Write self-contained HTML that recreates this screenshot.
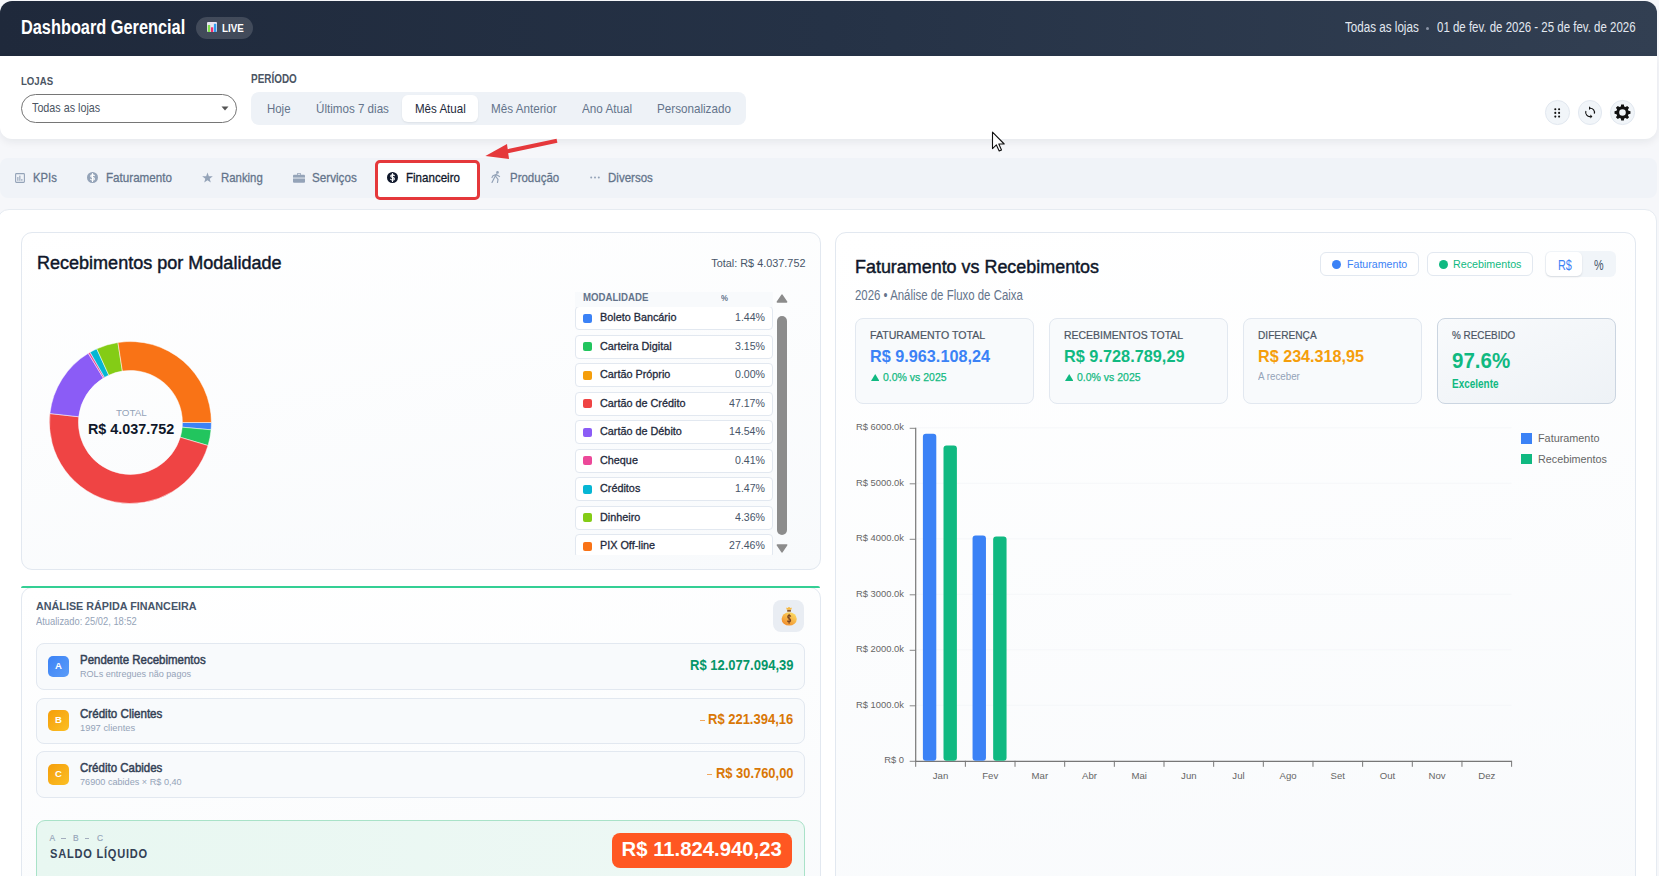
<!DOCTYPE html>
<html lang="pt-BR">
<head>
<meta charset="utf-8">
<title>Dashboard Gerencial</title>
<style>
*{box-sizing:border-box;margin:0;padding:0}
html,body{width:1659px;height:876px;overflow:hidden}
body{position:relative;background:#f6f7fa;font-family:"Liberation Sans",sans-serif;color:#0f172a}
.t{position:absolute;white-space:nowrap;line-height:1}
.b{position:absolute}
</style>
</head>
<body>
<div class="b" style="left:0;top:1px;width:1657px;height:55px;border-radius:12px 12px 0 0;background:linear-gradient(90deg,#1f293b 0%,#253246 50%,#323f52 100%)"></div>
<div class="t" style="left:20.80px;top:17.00px;font-size:20.00px;color:#ffffff;font-weight:bold;transform:scaleX(0.8162);transform-origin:0 0;">Dashboard Gerencial</div>
<div class="b" style="left:196px;top:17px;width:57px;height:22px;border-radius:11px;background:rgba(255,255,255,.15)"></div>
<svg class="b" style="left:207px;top:22px" width="10" height="10" viewBox="0 0 10 10">
<rect x="0" y="0" width="10" height="10" rx="1" fill="#e8e4f0"/>
<rect x="0.8" y="3" width="2.4" height="7" fill="#7ee04a"/>
<rect x="3.9" y="5.3" width="2.3" height="4.7" fill="#ee2d6e"/>
<rect x="6.9" y="1.8" width="2.4" height="8.2" fill="#2f9cf0"/>
</svg>
<div class="t" style="left:222.30px;top:24.00px;font-size:10.43px;color:#ffffff;font-weight:bold;transform:scaleX(0.9398);transform-origin:0 0;">LIVE</div>
<div class="t" style="left:1344.50px;top:20.00px;font-size:14.06px;color:#e2e8f0;transform:scaleX(0.8284);transform-origin:0 0;">Todas as lojas</div>
<div class="b" style="left:1426px;top:26.6px;width:3.4px;height:3.4px;border-radius:50%;background:#8a94a6"></div>
<div class="t" style="left:1436.70px;top:20.00px;font-size:14.06px;color:#e2e8f0;transform:scaleX(0.8165);transform-origin:0 0;">01 de fev. de 2026 - 25 de fev. de 2026</div>
<div class="b" style="left:0;top:56px;width:1657px;height:83px;background:#fff;border-radius:0 0 12px 12px;box-shadow:0 3px 8px rgba(15,23,42,.07)"></div>
<div class="t" style="left:20.70px;top:77.00px;font-size:10.43px;color:#4b5563;font-weight:bold;transform:scaleX(0.9227);transform-origin:0 0;">LOJAS</div>
<div class="b" style="left:21px;top:94px;width:216px;height:29px;border:1px solid #767676;border-radius:15px;background:#fff"></div>
<div class="t" style="left:32.10px;top:102.00px;font-size:12.46px;color:#4b5563;transform:scaleX(0.8635);transform-origin:0 0;">Todas as lojas</div>
<svg class="b" style="left:221px;top:106px" width="8" height="5" viewBox="0 0 8 5"><path d="M0.5 0.5 L7.5 0.5 L4 4.5 Z" fill="#555"/></svg>
<div class="t" style="left:251.30px;top:73.00px;font-size:12.17px;color:#4b5563;font-weight:bold;transform:scaleX(0.8175);transform-origin:0 0;">PERÍODO</div>
<div class="b" style="left:251px;top:92px;width:495px;height:33px;border-radius:8px;background:#eef2f7"></div>
<div class="b" style="left:402px;top:95px;width:76px;height:27px;border-radius:6px;background:#fff;box-shadow:0 1px 2px rgba(15,23,42,.08)"></div>
<div class="t" style="left:266.60px;top:102.00px;font-size:13.19px;color:#64748b;transform:scaleX(0.8662);transform-origin:0 0;">Hoje</div>
<div class="t" style="left:316.00px;top:102.00px;font-size:13.19px;color:#64748b;transform:scaleX(0.8802);transform-origin:0 0;">Últimos 7 dias</div>
<div class="t" style="left:414.50px;top:102.00px;font-size:13.19px;color:#1e293b;transform:scaleX(0.8755);transform-origin:0 0;">Mês Atual</div>
<div class="t" style="left:490.90px;top:102.00px;font-size:13.19px;color:#64748b;transform:scaleX(0.8862);transform-origin:0 0;">Mês Anterior</div>
<div class="t" style="left:581.80px;top:102.00px;font-size:13.19px;color:#64748b;transform:scaleX(0.8874);transform-origin:0 0;">Ano Atual</div>
<div class="t" style="left:657.20px;top:102.00px;font-size:13.19px;color:#64748b;transform:scaleX(0.8842);transform-origin:0 0;">Personalizado</div>
<div class="b" style="left:1545.15px;top:100.1px;width:24.5px;height:24.5px;border-radius:50%;background:#f1f5f9;border:1px solid #e2e8f0"></div>
<div class="b" style="left:1577.75px;top:100.1px;width:24.5px;height:24.5px;border-radius:50%;background:#f1f5f9;border:1px solid #e2e8f0"></div>
<div class="b" style="left:1610.15px;top:100.1px;width:24.5px;height:24.5px;border-radius:50%;background:#f1f5f9;border:1px solid #e2e8f0"></div>
<svg class="b" style="left:1554px;top:107.5px" width="7" height="10.5" viewBox="0 0 7 10.5"><circle cx="1.3" cy="1.2" r="1.05" fill="#111"/><circle cx="1.3" cy="4.9" r="1.05" fill="#111"/><circle cx="1.3" cy="8.6" r="1.05" fill="#111"/><circle cx="5.1" cy="1.2" r="1.05" fill="#111"/><circle cx="5.1" cy="4.9" r="1.05" fill="#111"/><circle cx="5.1" cy="8.6" r="1.05" fill="#111"/></svg>
<svg class="b" style="left:1583.9px;top:105.7px" width="12" height="13" viewBox="0 0 12 13">
<path d="M6.2 2.2 A4.2 4.2 0 0 1 10.3 7.6" fill="none" stroke="#111" stroke-width="1.1"/>
<path d="M1.9 5.0 A4.2 4.2 0 0 0 6.8 10.5" fill="none" stroke="#111" stroke-width="1.1"/>
<path d="M5.0 0.3 L5.0 4.1 L7.0 2.2 Z" fill="#111"/>
<path d="M6.4 8.4 L6.4 12.4 L8.4 10.4 Z" fill="#111"/>
</svg>
<svg class="b" style="left:1614px;top:104px" width="17" height="17" viewBox="0 0 17 17"><path d="M14.48 6.85 L16.48 7.13 L16.48 9.87 L14.48 10.15 L13.89 11.56 L15.11 13.18 L13.18 15.11 L11.56 13.89 L10.15 14.48 L9.87 16.48 L7.13 16.48 L6.85 14.48 L5.44 13.89 L3.82 15.11 L1.89 13.18 L3.11 11.56 L2.52 10.15 L0.52 9.87 L0.52 7.13 L2.52 6.85 L3.11 5.44 L1.89 3.82 L3.82 1.89 L5.44 3.11 L6.85 2.52 L7.13 0.52 L9.87 0.52 L10.15 2.52 L11.56 3.11 L13.18 1.89 L15.11 3.82 L13.89 5.44 Z M11.8 8.5 A3.3 3.3 0 1 0 5.2 8.5 A3.3 3.3 0 1 0 11.8 8.5 Z" fill="#111" fill-rule="evenodd"/></svg>
<div class="b" style="left:0;top:158px;width:1657px;height:40px;background:#f0f3f8;border-radius:8px"></div>
<div class="b" style="left:376.5px;top:162px;width:101px;height:35.5px;background:#fff"></div>
<div class="t" style="left:33.40px;top:171.00px;font-size:13.62px;color:#64748b;transform:scaleX(0.8307);transform-origin:0 0;-webkit-text-stroke:0.3px #64748b;">KPIs</div>
<div class="t" style="left:106.00px;top:171.00px;font-size:13.62px;color:#64748b;transform:scaleX(0.8546);transform-origin:0 0;-webkit-text-stroke:0.3px #64748b;">Faturamento</div>
<div class="t" style="left:221.40px;top:171.00px;font-size:13.62px;color:#64748b;transform:scaleX(0.8363);transform-origin:0 0;-webkit-text-stroke:0.3px #64748b;">Ranking</div>
<div class="t" style="left:312.30px;top:171.00px;font-size:13.62px;color:#64748b;transform:scaleX(0.8575);transform-origin:0 0;-webkit-text-stroke:0.3px #64748b;">Serviços</div>
<div class="t" style="left:406.30px;top:171.00px;font-size:13.62px;color:#0f172a;transform:scaleX(0.8490);transform-origin:0 0;-webkit-text-stroke:0.3px #0f172a;">Financeiro</div>
<div class="t" style="left:509.50px;top:171.00px;font-size:13.62px;color:#64748b;transform:scaleX(0.8436);transform-origin:0 0;-webkit-text-stroke:0.3px #64748b;">Produção</div>
<div class="t" style="left:608.30px;top:171.00px;font-size:13.62px;color:#64748b;transform:scaleX(0.8473);transform-origin:0 0;-webkit-text-stroke:0.3px #64748b;">Diversos</div>
<svg class="b" style="left:15px;top:172.8px" width="10" height="10" viewBox="0 0 10 10"><rect x="0.6" y="0.6" width="8.8" height="8.8" rx="0.8" fill="none" stroke="#94a3b8" stroke-width="1.1"/><rect x="2.3" y="4" width="1.1" height="3.8" fill="#94a3b8"/><rect x="4.3" y="2.6" width="1.1" height="5.2" fill="#94a3b8"/><rect x="6.3" y="6" width="1.1" height="1.8" fill="#94a3b8"/></svg>
<svg class="b" style="left:87px;top:172px" width="11" height="11" viewBox="0 0 11 11"><circle cx="5.5" cy="5.5" r="5.5" fill="#94a3b8"/><path d="M7.3 3.6 Q6.9 2.9 5.5 2.9 Q3.7 2.9 3.7 4.1 Q3.7 5.1 5.5 5.4 Q7.4 5.8 7.4 6.9 Q7.4 8.1 5.5 8.1 Q4.1 8.1 3.6 7.3 M5.5 1.6 V9.4" fill="none" stroke="#fff" stroke-width="1.15" stroke-linecap="round"/></svg>
<svg class="b" style="left:387px;top:172px" width="11" height="11" viewBox="0 0 11 11"><circle cx="5.5" cy="5.5" r="5.5" fill="#0f172a"/><path d="M7.3 3.6 Q6.9 2.9 5.5 2.9 Q3.7 2.9 3.7 4.1 Q3.7 5.1 5.5 5.4 Q7.4 5.8 7.4 6.9 Q7.4 8.1 5.5 8.1 Q4.1 8.1 3.6 7.3 M5.5 1.6 V9.4" fill="none" stroke="#fff" stroke-width="1.15" stroke-linecap="round"/></svg>
<svg class="b" style="left:202px;top:171.5px" width="11" height="11" viewBox="0 0 11 11"><polygon points="5.50,0.40 6.85,4.14 10.83,4.27 7.69,6.71 8.79,10.53 5.50,8.30 2.21,10.53 3.31,6.71 0.17,4.27 4.15,4.14" fill="#94a3b8"/></svg>
<svg class="b" style="left:293px;top:172px" width="12" height="11" viewBox="0 0 12 11"><path d="M4 1.2 H8 V2.8 H7 V2.1 H5 V2.8 H4Z" fill="#94a3b8"/><rect x="0" y="2.8" width="12" height="8" rx="1" fill="#94a3b8"/><rect x="0" y="5.6" width="12" height="0.9" fill="#eef2f7"/></svg>
<svg class="b" style="left:490.5px;top:171px" width="10" height="12" viewBox="0 0 10 12"><circle cx="6.5" cy="1.4" r="1.3" fill="#94a3b8"/><path d="M5.5 3 L3.5 6.5 L1 11.5 M4.8 5.5 L7 8.5 L6.5 11.5 M5.2 3.5 L8.5 5.5 M5 3.5 L2 4.8 L1 6.5" stroke="#94a3b8" stroke-width="1.2" fill="none" stroke-linecap="round"/></svg>
<svg class="b" style="left:589.5px;top:176px" width="10" height="3" viewBox="0 0 10 3"><circle cx="1.2" cy="1.5" r="1" fill="#94a3b8"/><circle cx="5" cy="1.5" r="1" fill="#94a3b8"/><circle cx="8.8" cy="1.5" r="1" fill="#94a3b8"/></svg>
<div class="b" style="left:374.5px;top:160px;width:105px;height:39.5px;border:3.9px solid #e5383b;border-radius:5px"></div>
<svg class="b" style="left:470px;top:130px" width="100" height="40" viewBox="470 130 100 40"><line x1="504" y1="152" x2="557" y2="140.8" stroke="#e5383b" stroke-width="4"/><polygon points="485.4,156 507,144 509,159" fill="#e5383b"/></svg>
<div class="b" style="left:-3px;top:209px;width:1660px;height:700px;background:#fff;border-radius:12px;border:1px solid #e6ebf1"></div>
<div class="b" style="left:21.3px;top:232.3px;width:799.8px;height:337.4px;border:1px solid #e2e8f0;border-radius:11px;background:linear-gradient(170deg,#ffffff 0%,#f8fafc 100%)"></div>
<div class="t" style="left:36.70px;top:254.00px;font-size:18.41px;color:#0f172a;transform:scaleX(0.9793);transform-origin:0 0;-webkit-text-stroke:0.45px #0f172a;">Recebimentos por Modalidade</div>
<div class="t" style="left:711.30px;top:258.00px;font-size:10.87px;color:#475569;">Total: R$ 4.037.752</div>
<svg class="b" style="left:0;top:0" width="260" height="520" viewBox="0 0 260 520"><path d="M211.40 422.50 A81 81 0 0 1 211.07 429.82 L182.19 427.20 A52 52 0 0 0 182.40 422.50 Z" fill="#3b82f6" stroke="#fff" stroke-width="0.5"/><path d="M211.07 429.82 A81 81 0 0 1 208.05 445.54 L180.25 437.29 A52 52 0 0 0 182.19 427.20 Z" fill="#22c55e" stroke="#fff" stroke-width="0.5"/><path d="M208.05 445.54 A81 81 0 0 1 49.89 413.56 L78.72 416.76 A52 52 0 0 0 180.25 437.29 Z" fill="#ef4444" stroke="#fff" stroke-width="0.5"/><path d="M49.89 413.56 A81 81 0 0 1 88.29 353.30 L103.37 378.08 A52 52 0 0 0 78.72 416.76 Z" fill="#8b5cf6" stroke="#fff" stroke-width="0.5"/><path d="M88.29 353.30 A81 81 0 0 1 90.09 352.24 L104.52 377.40 A52 52 0 0 0 103.37 378.08 Z" fill="#ec4899" stroke="#fff" stroke-width="0.5"/><path d="M90.09 352.24 A81 81 0 0 1 96.74 348.82 L108.79 375.20 A52 52 0 0 0 104.52 377.40 Z" fill="#06b6d4" stroke="#fff" stroke-width="0.5"/><path d="M96.74 348.82 A81 81 0 0 1 117.93 342.47 L122.39 371.12 A52 52 0 0 0 108.79 375.20 Z" fill="#84cc16" stroke="#fff" stroke-width="0.5"/><path d="M117.93 342.47 A81 81 0 0 1 211.40 422.50 L182.40 422.50 A52 52 0 0 0 122.39 371.12 Z" fill="#f97316" stroke="#fff" stroke-width="0.5"/></svg>
<div class="t" style="left:116.00px;top:408.00px;font-size:9.86px;color:#94a3b8;">TOTAL</div>
<div class="t" style="left:88.30px;top:422.00px;font-size:14.06px;color:#0f172a;font-weight:bold;transform:scaleX(1.0223);transform-origin:0 0;">R$ 4.037.752</div>
<div class="b" style="left:0;top:291.6px;width:800px;height:263.2px;overflow:hidden"><div class="b" style="left:0;top:-291.6px;width:800px;height:900px"><div class="b" style="left:575px;top:306.1px;width:197.5px;height:24px;background:#fff;border:1px solid #e2e8f0;border-radius:4px"></div><div class="b" style="left:583px;top:313.80px;width:9px;height:9px;border-radius:2px;background:#3b82f6"></div><div class="t" style="left:599.50px;top:312.00px;font-size:11.40px;color:#1e293b;transform:scaleX(0.9500);transform-origin:0 0;-webkit-text-stroke:0.3px #1e293b;">Boleto Bancário</div><div class="t" style="left:734.74px;top:312.00px;font-size:11.40px;color:#475569;transform:scaleX(0.9300);transform-origin:0 0;">1.44%</div><div class="b" style="left:575px;top:334.6px;width:197.5px;height:24px;background:#fff;border:1px solid #e2e8f0;border-radius:4px"></div><div class="b" style="left:583px;top:342.30px;width:9px;height:9px;border-radius:2px;background:#22c55e"></div><div class="t" style="left:599.50px;top:341.00px;font-size:11.40px;color:#1e293b;transform:scaleX(0.9500);transform-origin:0 0;-webkit-text-stroke:0.3px #1e293b;">Carteira Digital</div><div class="t" style="left:734.74px;top:341.00px;font-size:11.40px;color:#475569;transform:scaleX(0.9300);transform-origin:0 0;">3.15%</div><div class="b" style="left:575px;top:363.1px;width:197.5px;height:24px;background:#fff;border:1px solid #e2e8f0;border-radius:4px"></div><div class="b" style="left:583px;top:370.80px;width:9px;height:9px;border-radius:2px;background:#f59e0b"></div><div class="t" style="left:599.50px;top:369.00px;font-size:11.40px;color:#1e293b;transform:scaleX(0.9500);transform-origin:0 0;-webkit-text-stroke:0.3px #1e293b;">Cartão Próprio</div><div class="t" style="left:734.74px;top:369.00px;font-size:11.40px;color:#475569;transform:scaleX(0.9300);transform-origin:0 0;">0.00%</div><div class="b" style="left:575px;top:391.6px;width:197.5px;height:24px;background:#fff;border:1px solid #e2e8f0;border-radius:4px"></div><div class="b" style="left:583px;top:399.30px;width:9px;height:9px;border-radius:2px;background:#ef4444"></div><div class="t" style="left:599.50px;top:398.00px;font-size:11.40px;color:#1e293b;transform:scaleX(0.9500);transform-origin:0 0;-webkit-text-stroke:0.3px #1e293b;">Cartão de Crédito</div><div class="t" style="left:728.84px;top:398.00px;font-size:11.40px;color:#475569;transform:scaleX(0.9300);transform-origin:0 0;">47.17%</div><div class="b" style="left:575px;top:420.1px;width:197.5px;height:24px;background:#fff;border:1px solid #e2e8f0;border-radius:4px"></div><div class="b" style="left:583px;top:427.80px;width:9px;height:9px;border-radius:2px;background:#8b5cf6"></div><div class="t" style="left:599.50px;top:426.00px;font-size:11.40px;color:#1e293b;transform:scaleX(0.9500);transform-origin:0 0;-webkit-text-stroke:0.3px #1e293b;">Cartão de Débito</div><div class="t" style="left:728.84px;top:426.00px;font-size:11.40px;color:#475569;transform:scaleX(0.9300);transform-origin:0 0;">14.54%</div><div class="b" style="left:575px;top:448.6px;width:197.5px;height:24px;background:#fff;border:1px solid #e2e8f0;border-radius:4px"></div><div class="b" style="left:583px;top:456.30px;width:9px;height:9px;border-radius:2px;background:#ec4899"></div><div class="t" style="left:599.50px;top:455.00px;font-size:11.40px;color:#1e293b;transform:scaleX(0.9500);transform-origin:0 0;-webkit-text-stroke:0.3px #1e293b;">Cheque</div><div class="t" style="left:734.74px;top:455.00px;font-size:11.40px;color:#475569;transform:scaleX(0.9300);transform-origin:0 0;">0.41%</div><div class="b" style="left:575px;top:477.1px;width:197.5px;height:24px;background:#fff;border:1px solid #e2e8f0;border-radius:4px"></div><div class="b" style="left:583px;top:484.80px;width:9px;height:9px;border-radius:2px;background:#06b6d4"></div><div class="t" style="left:599.50px;top:483.00px;font-size:11.40px;color:#1e293b;transform:scaleX(0.9500);transform-origin:0 0;-webkit-text-stroke:0.3px #1e293b;">Créditos</div><div class="t" style="left:734.74px;top:483.00px;font-size:11.40px;color:#475569;transform:scaleX(0.9300);transform-origin:0 0;">1.47%</div><div class="b" style="left:575px;top:505.6px;width:197.5px;height:24px;background:#fff;border:1px solid #e2e8f0;border-radius:4px"></div><div class="b" style="left:583px;top:513.30px;width:9px;height:9px;border-radius:2px;background:#84cc16"></div><div class="t" style="left:599.50px;top:512.00px;font-size:11.40px;color:#1e293b;transform:scaleX(0.9500);transform-origin:0 0;-webkit-text-stroke:0.3px #1e293b;">Dinheiro</div><div class="t" style="left:734.74px;top:512.00px;font-size:11.40px;color:#475569;transform:scaleX(0.9300);transform-origin:0 0;">4.36%</div><div class="b" style="left:575px;top:534.1px;width:197.5px;height:24px;background:#fff;border:1px solid #e2e8f0;border-radius:4px"></div><div class="b" style="left:583px;top:541.80px;width:9px;height:9px;border-radius:2px;background:#f97316"></div><div class="t" style="left:599.50px;top:540.00px;font-size:11.40px;color:#1e293b;transform:scaleX(0.9500);transform-origin:0 0;-webkit-text-stroke:0.3px #1e293b;">PIX Off-line</div><div class="t" style="left:728.84px;top:540.00px;font-size:11.40px;color:#475569;transform:scaleX(0.9300);transform-origin:0 0;">27.46%</div></div></div>
<div class="b" style="left:574.7px;top:291.6px;width:198px;height:15.5px;background:#f8fafc"></div>
<div class="t" style="left:582.50px;top:293.00px;font-size:10.14px;color:#64748b;font-weight:bold;transform:scaleX(0.9527);transform-origin:0 0;">MODALIDADE</div>
<div class="t" style="left:721.30px;top:293.00px;font-size:9.42px;color:#64748b;font-weight:bold;transform:scaleX(0.8359);transform-origin:0 0;">%</div>
<div class="b" style="left:777px;top:315.6px;width:10px;height:219.2px;border-radius:5px;background:#8c8c8c"></div>
<svg class="b" style="left:776px;top:294px" width="12" height="9" viewBox="0 0 12 9"><path d="M6 1.2 L10.6 7.9 L1.4 7.9 Z" fill="#8c8c8c" stroke="#8c8c8c" stroke-width="1.6" stroke-linejoin="round"/></svg>
<svg class="b" style="left:776px;top:544px" width="12" height="9" viewBox="0 0 12 9"><path d="M6 7.8 L10.6 1.0 L1.4 1.0 Z" fill="#8c8c8c" stroke="#8c8c8c" stroke-width="1.6" stroke-linejoin="round"/></svg>
<div class="b" style="left:21.1px;top:587px;width:799.8px;height:400px;border:1px solid #e2e8f0;border-radius:11px;background:linear-gradient(170deg,#ffffff 0%,#f8fafc 100%)"></div>
<div class="b" style="left:21.1px;top:585.7px;width:799.1px;height:2.4px;border-radius:3px 3px 0 0;background:#34cf94"></div>
<div class="t" style="left:36.00px;top:600.00px;font-size:11.74px;color:#475569;font-weight:bold;transform:scaleX(0.9182);transform-origin:0 0;">ANÁLISE RÁPIDA FINANCEIRA</div>
<div class="t" style="left:36.00px;top:617.00px;font-size:10.14px;color:#94a3b8;transform:scaleX(0.9230);transform-origin:0 0;">Atualizado: 25/02, 18:52</div>
<div class="b" style="left:772.9px;top:599.7px;width:31.5px;height:32px;border-radius:8px;background:#e9edf3"></div>
<svg class="b" style="left:773px;top:599.5px" width="32" height="32" viewBox="0 0 32 32">
<defs><linearGradient id="bagg" x1="0.8" y1="0.1" x2="0.2" y2="0.95"><stop offset="0" stop-color="#fcd860"/><stop offset="1" stop-color="#f08c2c"/></linearGradient></defs>
<path d="M13 7.6 Q14.2 8.4 15 7.4 Q16 6.6 17 7.4 Q17.8 8.4 19 7.6 L18.2 9.8 L13.8 9.8 Z" fill="#f7b942"/>
<rect x="14.2" y="9.9" width="3.7" height="1.8" fill="#8a5526"/>
<ellipse cx="16.2" cy="18.9" rx="7.6" ry="6.7" fill="url(#bagg)"/>
<path d="M17.6 16.2 Q17.2 15.3 16.1 15.3 Q14.7 15.3 14.7 16.8 Q14.7 18.1 16.1 18.5 Q17.6 18.9 17.6 20.4 Q17.6 22 16.1 22 Q14.9 22 14.5 21 M16.1 14.2 V23.2" fill="none" stroke="#7a4420" stroke-width="1.1" stroke-linecap="round"/>
</svg>
<div class="b" style="left:36.3px;top:643.4px;width:769px;height:46.6px;border:1px solid #e2e8f0;border-radius:8px;background:#f8fafc"></div>
<div class="b" style="left:47.9px;top:655.60px;width:21px;height:21px;border-radius:5px;background:linear-gradient(135deg,#3b82f6,#5b9cf8)"></div>
<div class="t" style="left:54.95px;top:661.00px;font-size:9.57px;color:#fff;font-weight:bold;">A</div>
<div class="t" style="left:80.40px;top:653.00px;font-size:13.20px;color:#334155;transform:scaleX(0.8702);transform-origin:0 0;-webkit-text-stroke:0.5px #334155;">Pendente Recebimentos</div>
<div class="t" style="left:80.40px;top:669.00px;font-size:9.57px;color:#94a3b8;transform:scaleX(0.9496);transform-origin:0 0;">ROLs entregues não pagos</div>
<div class="t" style="left:689.70px;top:659.00px;font-size:13.77px;color:#059669;font-weight:bold;transform:scaleX(0.9455);transform-origin:0 0;">R$ 12.077.094,39</div>
<div class="b" style="left:36.3px;top:697.5px;width:769px;height:46.6px;border:1px solid #e2e8f0;border-radius:8px;background:#f8fafc"></div>
<div class="b" style="left:47.9px;top:709.70px;width:21px;height:21px;border-radius:5px;background:linear-gradient(135deg,#f59e0b,#fbbf24)"></div>
<div class="t" style="left:54.95px;top:715.00px;font-size:9.57px;color:#fff;font-weight:bold;">B</div>
<div class="t" style="left:80.40px;top:707.00px;font-size:13.20px;color:#334155;transform:scaleX(0.8775);transform-origin:0 0;-webkit-text-stroke:0.5px #334155;">Crédito Clientes</div>
<div class="t" style="left:80.40px;top:723.00px;font-size:9.57px;color:#94a3b8;transform:scaleX(0.9793);transform-origin:0 0;">1997 clientes</div>
<div class="t" style="left:708.00px;top:713.00px;font-size:13.77px;color:#d97706;font-weight:bold;transform:scaleX(0.9432);transform-origin:0 0;">R$ 221.394,16</div>
<div class="b" style="left:699.50px;top:719.80px;width:5px;height:1.2px;background:#f0a860"></div>
<div class="b" style="left:36.3px;top:751.3px;width:769px;height:46.6px;border:1px solid #e2e8f0;border-radius:8px;background:#f8fafc"></div>
<div class="b" style="left:47.9px;top:763.50px;width:21px;height:21px;border-radius:5px;background:linear-gradient(135deg,#f59e0b,#fbbf24)"></div>
<div class="t" style="left:54.95px;top:769.00px;font-size:9.57px;color:#fff;font-weight:bold;">C</div>
<div class="t" style="left:80.40px;top:761.00px;font-size:13.20px;color:#334155;transform:scaleX(0.8706);transform-origin:0 0;-webkit-text-stroke:0.5px #334155;">Crédito Cabides</div>
<div class="t" style="left:80.40px;top:777.00px;font-size:9.57px;color:#94a3b8;transform:scaleX(0.9537);transform-origin:0 0;">76900 cabides × R$ 0,40</div>
<div class="t" style="left:715.70px;top:767.00px;font-size:13.77px;color:#d97706;font-weight:bold;transform:scaleX(0.9374);transform-origin:0 0;">R$ 30.760,00</div>
<div class="b" style="left:707.20px;top:773.60px;width:5px;height:1.2px;background:#f0a860"></div>
<div class="b" style="left:36.3px;top:819.8px;width:769px;height:100px;border:1px solid #a9e2c8;border-radius:9px;background:linear-gradient(90deg,#e8f7f1,#eef8f5)"></div>
<div class="t" style="left:49.50px;top:834.00px;font-size:8.41px;color:#94a3b8;-webkit-text-stroke:0.15px #94a3b8;">A</div>
<div class="b" style="left:61.4px;top:838.4px;width:4.4px;height:0.9px;background:#a3adbd"></div>
<div class="t" style="left:73.00px;top:834.00px;font-size:8.41px;color:#94a3b8;-webkit-text-stroke:0.15px #94a3b8;">B</div>
<div class="b" style="left:85px;top:838.4px;width:4.4px;height:0.9px;background:#a3adbd"></div>
<div class="t" style="left:96.90px;top:834.00px;font-size:8.41px;color:#94a3b8;-webkit-text-stroke:0.15px #94a3b8;">C</div>
<div class="t" style="left:49.50px;top:847.00px;font-size:13.19px;color:#334155;font-weight:bold;letter-spacing:0.9px;transform:scaleX(0.8402);transform-origin:0 0;">SALDO LÍQUIDO</div>
<div class="b" style="left:612.2px;top:832.8px;width:180px;height:34.9px;border-radius:8px;background:#ff5722"></div>
<div class="t" style="left:621.60px;top:839.00px;font-size:20.29px;color:#ffffff;font-weight:bold;">R$ 11.824.940,23</div>
<div class="b" style="left:835.4px;top:232.3px;width:800.7px;height:700px;border:1px solid #e2e8f0;border-radius:11px;background:linear-gradient(170deg,#ffffff 0%,#f8fafc 100%)"></div>
<div class="t" style="left:854.60px;top:258.00px;font-size:18.41px;color:#0f172a;transform:scaleX(0.9735);transform-origin:0 0;-webkit-text-stroke:0.45px #0f172a;">Faturamento vs Recebimentos</div>
<div class="t" style="left:854.60px;top:288.00px;font-size:14.64px;color:#64748b;transform:scaleX(0.7811);transform-origin:0 0;">2026 • Análise de Fluxo de Caixa</div>
<div class="b" style="left:1320px;top:252.3px;width:99px;height:24px;border:1px solid #e2e8f0;border-radius:6px;background:#fff"></div>
<div class="b" style="left:1331.6px;top:259.8px;width:9px;height:9px;border-radius:50%;background:#3b82f6"></div>
<div class="t" style="left:1346.70px;top:258.00px;font-size:11.74px;color:#3b82f6;transform:scaleX(0.9061);transform-origin:0 0;">Faturamento</div>
<div class="b" style="left:1427px;top:252.3px;width:105.8px;height:24px;border:1px solid #e2e8f0;border-radius:6px;background:#fff"></div>
<div class="b" style="left:1438.7px;top:259.8px;width:9px;height:9px;border-radius:50%;background:#10b981"></div>
<div class="t" style="left:1452.70px;top:258.00px;font-size:11.74px;color:#10b981;transform:scaleX(0.9129);transform-origin:0 0;">Recebimentos</div>
<div class="b" style="left:1545.3px;top:251.2px;width:70.5px;height:26.2px;border-radius:6px;background:#f1f5f9"></div>
<div class="b" style="left:1545.7px;top:252.3px;width:36.7px;height:23.6px;border-radius:5px;background:#fff;box-shadow:0 1px 2px rgba(15,23,42,.12)"></div>
<div class="t" style="left:1557.50px;top:258.00px;font-size:14.35px;color:#3b82f6;transform:scaleX(0.7580);transform-origin:0 0;">R$</div>
<div class="t" style="left:1593.60px;top:258.00px;font-size:14.35px;color:#475569;transform:scaleX(0.7526);transform-origin:0 0;">%</div>
<div class="b" style="left:855px;top:318.2px;width:178.6px;height:86.1px;border:1px solid #e2e8f0;border-radius:8px;background:#f8fafc"></div>
<div class="t" style="left:869.90px;top:330.00px;font-size:11.30px;color:#4b5563;transform:scaleX(0.9389);transform-origin:0 0;-webkit-text-stroke:0.2px #4b5563;">FATURAMENTO TOTAL</div>
<div class="t" style="left:869.90px;top:348.00px;font-size:17.25px;color:#3b82f6;font-weight:bold;transform:scaleX(0.9409);transform-origin:0 0;">R$ 9.963.108,24</div>
<svg class="b" style="left:870.70px;top:373.9px" width="8.4" height="7" viewBox="0 0 8.4 7"><path d="M4.2 0 L8.4 7 L0 7 Z" fill="#10b981"/></svg>
<div class="t" style="left:883.40px;top:371.00px;font-size:11.74px;color:#10b981;transform:scaleX(0.8940);transform-origin:0 0;-webkit-text-stroke:0.25px #10b981;">0.0% vs 2025</div>
<div class="b" style="left:1049px;top:318.2px;width:178.6px;height:86.1px;border:1px solid #e2e8f0;border-radius:8px;background:#f8fafc"></div>
<div class="t" style="left:1063.90px;top:330.00px;font-size:11.30px;color:#4b5563;transform:scaleX(0.9272);transform-origin:0 0;-webkit-text-stroke:0.2px #4b5563;">RECEBIMENTOS TOTAL</div>
<div class="t" style="left:1063.90px;top:348.00px;font-size:17.25px;color:#10b981;font-weight:bold;transform:scaleX(0.9448);transform-origin:0 0;">R$ 9.728.789,29</div>
<svg class="b" style="left:1064.70px;top:373.9px" width="8.4" height="7" viewBox="0 0 8.4 7"><path d="M4.2 0 L8.4 7 L0 7 Z" fill="#10b981"/></svg>
<div class="t" style="left:1077.40px;top:371.00px;font-size:11.74px;color:#10b981;transform:scaleX(0.8940);transform-origin:0 0;-webkit-text-stroke:0.25px #10b981;">0.0% vs 2025</div>
<div class="b" style="left:1243px;top:318.2px;width:178.6px;height:86.1px;border:1px solid #e2e8f0;border-radius:8px;background:#f8fafc"></div>
<div class="t" style="left:1257.90px;top:330.00px;font-size:11.30px;color:#4b5563;transform:scaleX(0.8987);transform-origin:0 0;-webkit-text-stroke:0.2px #4b5563;">DIFERENÇA</div>
<div class="t" style="left:1257.90px;top:348.00px;font-size:17.25px;color:#f59e0b;font-weight:bold;transform:scaleX(0.9368);transform-origin:0 0;">R$ 234.318,95</div>
<div class="t" style="left:1257.90px;top:372.00px;font-size:10.43px;color:#94a3b8;transform:scaleX(0.9382);transform-origin:0 0;">A receber</div>
<div class="b" style="left:1437px;top:318.2px;width:179.1px;height:86.1px;border:1px solid #cbd5e1;border-radius:8px;background:linear-gradient(160deg,#f8fafc,#eef2f6)"></div>
<div class="t" style="left:1451.90px;top:330.00px;font-size:11.30px;color:#4b5563;transform:scaleX(0.8763);transform-origin:0 0;-webkit-text-stroke:0.2px #4b5563;">% RECEBIDO</div>
<div class="t" style="left:1452.40px;top:350.00px;font-size:22.46px;color:#10b981;font-weight:bold;transform:scaleX(0.9139);transform-origin:0 0;">97.6%</div>
<div class="t" style="left:1452.40px;top:378.00px;font-size:12.17px;color:#10b981;font-weight:bold;transform:scaleX(0.8198);transform-origin:0 0;">Excelente</div>
<svg class="b" style="left:0;top:0" width="1659" height="876" viewBox="0 0 1659 876"><line x1="915.7" y1="760.8" x2="1511.62" y2="760.8" stroke="#f6f7f9" stroke-width="1"/><line x1="909.7" y1="761.3" x2="915.7" y2="761.3" stroke="#888" stroke-width="1"/><line x1="915.7" y1="705.3" x2="1511.62" y2="705.3" stroke="#f6f7f9" stroke-width="1"/><line x1="909.7" y1="705.8" x2="915.7" y2="705.8" stroke="#888" stroke-width="1"/><line x1="915.7" y1="649.8" x2="1511.62" y2="649.8" stroke="#f6f7f9" stroke-width="1"/><line x1="909.7" y1="650.3" x2="915.7" y2="650.3" stroke="#888" stroke-width="1"/><line x1="915.7" y1="594.3" x2="1511.62" y2="594.3" stroke="#f6f7f9" stroke-width="1"/><line x1="909.7" y1="594.8" x2="915.7" y2="594.8" stroke="#888" stroke-width="1"/><line x1="915.7" y1="538.8" x2="1511.62" y2="538.8" stroke="#f6f7f9" stroke-width="1"/><line x1="909.7" y1="539.3" x2="915.7" y2="539.3" stroke="#888" stroke-width="1"/><line x1="915.7" y1="483.29999999999995" x2="1511.62" y2="483.29999999999995" stroke="#f6f7f9" stroke-width="1"/><line x1="909.7" y1="483.79999999999995" x2="915.7" y2="483.79999999999995" stroke="#888" stroke-width="1"/><line x1="915.7" y1="427.79999999999995" x2="1511.62" y2="427.79999999999995" stroke="#f6f7f9" stroke-width="1"/><line x1="909.7" y1="428.29999999999995" x2="915.7" y2="428.29999999999995" stroke="#888" stroke-width="1"/><line x1="915.7" y1="427.8" x2="915.7" y2="761.3" stroke="#777" stroke-width="1.2"/><line x1="915.7" y1="761.3" x2="1511.62" y2="761.3" stroke="#777" stroke-width="1.2"/><line x1="915.7" y1="760.8" x2="915.7" y2="766.8" stroke="#777" stroke-width="1"/><line x1="965.36" y1="760.8" x2="965.36" y2="766.8" stroke="#777" stroke-width="1"/><line x1="1015.02" y1="760.8" x2="1015.02" y2="766.8" stroke="#777" stroke-width="1"/><line x1="1064.68" y1="760.8" x2="1064.68" y2="766.8" stroke="#777" stroke-width="1"/><line x1="1114.3400000000001" y1="760.8" x2="1114.3400000000001" y2="766.8" stroke="#777" stroke-width="1"/><line x1="1164.0" y1="760.8" x2="1164.0" y2="766.8" stroke="#777" stroke-width="1"/><line x1="1213.66" y1="760.8" x2="1213.66" y2="766.8" stroke="#777" stroke-width="1"/><line x1="1263.3200000000002" y1="760.8" x2="1263.3200000000002" y2="766.8" stroke="#777" stroke-width="1"/><line x1="1312.98" y1="760.8" x2="1312.98" y2="766.8" stroke="#777" stroke-width="1"/><line x1="1362.6399999999999" y1="760.8" x2="1362.6399999999999" y2="766.8" stroke="#777" stroke-width="1"/><line x1="1412.3" y1="760.8" x2="1412.3" y2="766.8" stroke="#777" stroke-width="1"/><line x1="1461.96" y1="760.8" x2="1461.96" y2="766.8" stroke="#777" stroke-width="1"/><line x1="1511.62" y1="760.8" x2="1511.62" y2="766.8" stroke="#777" stroke-width="1"/><rect x="922.9" y="433.7" width="13.4" height="327.09999999999997" rx="3" ry="3" fill="#3b82f6"/><rect x="943.5" y="445.6" width="13.4" height="315.19999999999993" rx="3" ry="3" fill="#10b981"/><rect x="972.56" y="535.4" width="13.4" height="225.39999999999998" rx="3" ry="3" fill="#3b82f6"/><rect x="993.16" y="536.4" width="13.4" height="224.39999999999998" rx="3" ry="3" fill="#10b981"/></svg>
<div class="t" style="left:884.25px;top:755.00px;font-size:9.40px;color:#666666;">R$ 0</div>
<div class="t" style="left:856.00px;top:700.00px;font-size:9.40px;color:#666666;">R$ 1000.0k</div>
<div class="t" style="left:856.00px;top:644.00px;font-size:9.40px;color:#666666;">R$ 2000.0k</div>
<div class="t" style="left:856.00px;top:589.00px;font-size:9.40px;color:#666666;">R$ 3000.0k</div>
<div class="t" style="left:856.00px;top:533.00px;font-size:9.40px;color:#666666;">R$ 4000.0k</div>
<div class="t" style="left:856.00px;top:478.00px;font-size:9.40px;color:#666666;">R$ 5000.0k</div>
<div class="t" style="left:856.00px;top:422.00px;font-size:9.40px;color:#666666;">R$ 6000.0k</div>
<div class="t" style="left:932.79px;top:771.00px;font-size:9.60px;color:#666666;">Jan</div>
<div class="t" style="left:982.19px;top:771.00px;font-size:9.60px;color:#666666;">Fev</div>
<div class="t" style="left:1031.58px;top:771.00px;font-size:9.60px;color:#666666;">Mar</div>
<div class="t" style="left:1082.04px;top:771.00px;font-size:9.60px;color:#666666;">Abr</div>
<div class="t" style="left:1131.44px;top:771.00px;font-size:9.60px;color:#666666;">Mai</div>
<div class="t" style="left:1181.09px;top:771.00px;font-size:9.60px;color:#666666;">Jun</div>
<div class="t" style="left:1232.36px;top:771.00px;font-size:9.60px;color:#666666;">Jul</div>
<div class="t" style="left:1279.61px;top:771.00px;font-size:9.60px;color:#666666;">Ago</div>
<div class="t" style="left:1330.61px;top:771.00px;font-size:9.60px;color:#666666;">Set</div>
<div class="t" style="left:1379.73px;top:771.00px;font-size:9.60px;color:#666666;">Out</div>
<div class="t" style="left:1428.60px;top:771.00px;font-size:9.60px;color:#666666;">Nov</div>
<div class="t" style="left:1478.26px;top:771.00px;font-size:9.60px;color:#666666;">Dez</div>
<div class="b" style="left:1520.5px;top:433.2px;width:11px;height:10.5px;background:#3b82f6"></div>
<div class="b" style="left:1520.5px;top:453.8px;width:11px;height:10.5px;background:#10b981"></div>
<div class="t" style="left:1537.60px;top:433.00px;font-size:11.01px;color:#666666;transform:scaleX(0.9849);transform-origin:0 0;">Faturamento</div>
<div class="t" style="left:1537.60px;top:454.00px;font-size:11.01px;color:#666666;transform:scaleX(0.9800);transform-origin:0 0;">Recebimentos</div>
<svg class="b" style="left:991px;top:131px" width="16" height="22" viewBox="0 0 16 22"><path d="M1.5 1.2 L1.5 17.6 L5.4 13.9 L8.2 19.9 L10.5 18.9 L7.8 13.0 L13.2 13.0 Z" fill="#fff" stroke="#111" stroke-width="1.1" stroke-linejoin="round"/></svg>
</body>
</html>
